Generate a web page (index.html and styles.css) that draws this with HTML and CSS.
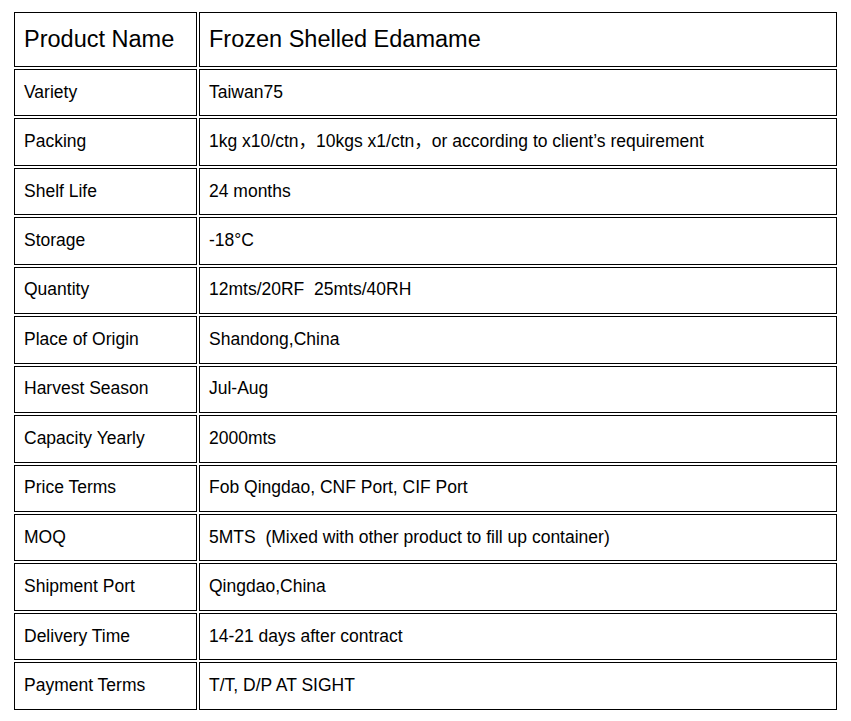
FILE: index.html
```html
<!DOCTYPE html>
<html>
<head>
<meta charset="utf-8">
<link rel="stylesheet" href="styles.css">
</head>
<body>
<table class="spec">
  <tbody>
    <tr class="head-row"><td class="label">Product Name</td><td class="value">Frozen Shelled Edamame</td></tr>
    <tr><td class="label">Variety</td><td class="value">Taiwan75</td></tr>
    <tr><td class="label">Packing</td><td class="value">1kg x10/ctn，10kgs x1/ctn，or according to client’s requirement</td></tr>
    <tr><td class="label">Shelf Life</td><td class="value">24 months</td></tr>
    <tr><td class="label">Storage</td><td class="value">-18°C</td></tr>
    <tr><td class="label">Quantity</td><td class="value">12mts/20RF&nbsp; 25mts/40RH</td></tr>
    <tr><td class="label">Place of Origin</td><td class="value">Shandong,China</td></tr>
    <tr><td class="label">Harvest Season</td><td class="value">Jul-Aug</td></tr>
    <tr><td class="label">Capacity Yearly</td><td class="value">2000mts</td></tr>
    <tr><td class="label">Price Terms</td><td class="value">Fob Qingdao, CNF Port, CIF Port</td></tr>
    <tr><td class="label">MOQ</td><td class="value">5MTS&nbsp; (Mixed with other product to fill up container)</td></tr>
    <tr><td class="label">Shipment Port</td><td class="value">Qingdao,China</td></tr>
    <tr><td class="label">Delivery Time</td><td class="value">14-21 days after contract</td></tr>
    <tr><td class="label">Payment Terms</td><td class="value">T/T, D/P AT SIGHT</td></tr>
  </tbody>
</table>
</body>
</html>
```

FILE: styles.css
```css
html, body {
  background: #fff;
}
body {
  margin: 8px;
  font-family: "Liberation Sans", Arial, "Noto Sans CJK SC", sans-serif;
  color: #000;
}
.spec {
  width: 827px;
  margin: 2px 4px 0;
  border-collapse: separate;
  border-spacing: 2px;
  table-layout: fixed;
}
.spec td {
  border: 1px solid #000;
  font-size: 17.5px;
  line-height: 20px;
  padding: 0 9px 2px;
  height: 47.45px;
  box-sizing: border-box;
  vertical-align: middle;
}
.spec td.label {
  width: 183px;
}
.spec .head-row td {
  font-size: 23.5px;
  line-height: 27px;
  height: 55px;
  padding: 0 9px 1px;
}
```
